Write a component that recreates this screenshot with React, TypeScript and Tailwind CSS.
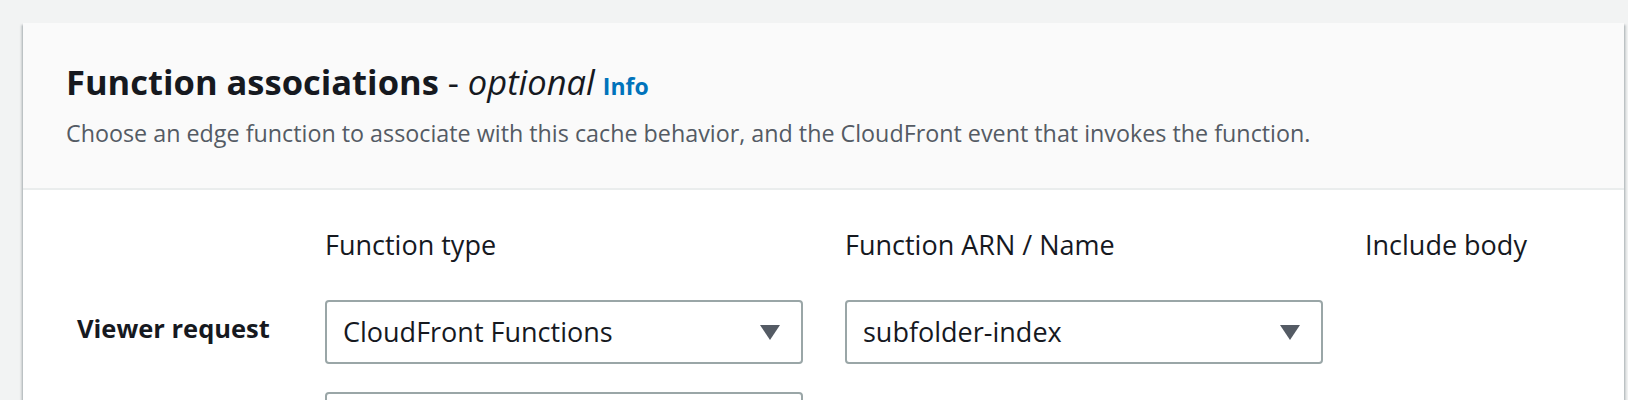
import React from "react";

const ROWS = [
  { event: "Viewer request", type: "CloudFront Functions", fn: "subfolder-index" },
  { event: "", type: "", fn: "" },
];

function Caret() {
  return (
    <svg width="20" height="15" viewBox="0 0 20 15" className="shrink-0">
      <path d="M0 0 H20 L10 15 Z" fill="#545b64" />
    </svg>
  );
}

function Select({ value }: { value: string }) {
  return (
    <div className="flex h-[64px] w-[478px] items-center justify-between rounded-[4px] border-2 border-[#9aa6a7] bg-white pl-[16px] pr-[21px]">
      <span className="text-[27px] leading-[36px] text-[#16191f]">{value}</span>
      <Caret />
    </div>
  );
}

export default function App() {
  return (
    <div
      className="h-[400px] overflow-hidden bg-[#f2f3f3] pl-[23px] pr-[4px] pt-[23px]"
      style={{ fontFamily: '"Open Sans", "Noto Sans", sans-serif' }}
    >
      <div className="bg-white shadow-[0_2px_2px_0_rgba(0,28,36,0.3),2px_2px_2px_0_rgba(0,28,36,0.15),-2px_2px_2px_0_rgba(0,28,36,0.15)]">
        {/* header */}
        <div className="border-b-2 border-[#eaeded] bg-[#fafafa] pb-[39px] pl-[43px] pt-[37px]">
          <h2 className="text-[34.5px] leading-[44px] text-[#16191f]">
            <span className="font-bold">Function associations</span>
            <span> - </span>
            <span className="italic">optional</span>
            <a className="ml-[8px] text-[23px] font-bold text-[#0073bb]">Info</a>
          </h2>
          <p className="mt-[9px] text-[23.3px] leading-[32px] text-[#545b64]">
            Choose an edge function to associate with this cache behavior, and the CloudFront event that invokes the function.
          </p>
        </div>

        {/* body */}
        <div className="grid grid-cols-[260px_478px_478px_1fr] items-center gap-x-[42px] gap-y-[28px] pt-[37px]">
          <div />
          <div className="mb-[9px] text-[27px] leading-[36px] text-[#16191f]">Function type</div>
          <div className="mb-[9px] text-[27px] leading-[36px] text-[#16191f]">Function ARN / Name</div>
          <div className="mb-[9px] text-[27px] leading-[36px] text-[#16191f]">Include body</div>

          {ROWS.map((row, i) => (
            <React.Fragment key={i}>
              <div className="pb-[8px] pl-[54px] text-[25.5px] font-bold leading-[34px] text-[#16191f]">{row.event}</div>
              <Select value={row.type} />
              {row.fn ? <Select value={row.fn} /> : <div />}
              <div />
            </React.Fragment>
          ))}
        </div>
      </div>
    </div>
  );
}
